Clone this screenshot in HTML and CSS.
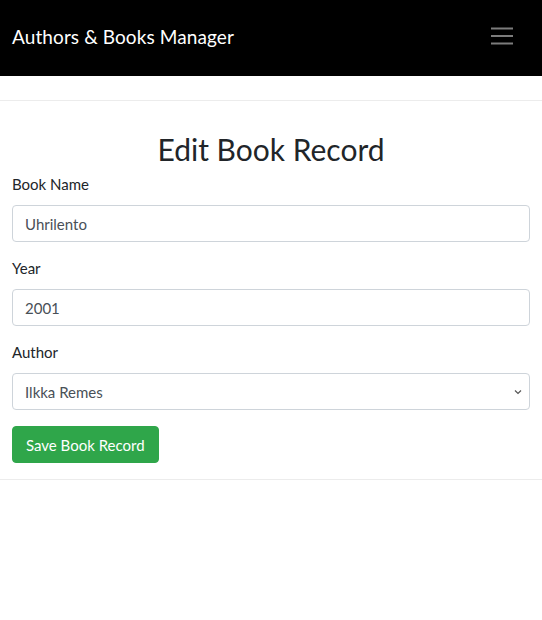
FILE: index.html
```html
<!DOCTYPE html>
<html lang="en">
<head>
<meta charset="utf-8">
<title>Edit Book Record</title>
<link rel="stylesheet" href="styles.css">
</head>
<body>
<nav class="navbar">
  <span class="brand">Authors &amp; Books Manager</span>
  <button class="toggler" type="button" aria-label="Toggle navigation">
    <svg width="30" height="30" viewBox="0 0 30 30"><path d="M4 7.5h22M4 15h22M4 22.5h22" stroke="#7c7c7c" stroke-width="2"/></svg>
  </button>
</nav>
<main class="container">
  <hr class="rule top">
  <h2 class="title">Edit Book Record</h2>
  <form class="form">
    <div class="group">
      <label class="label">Book Name</label>
      <input class="control" type="text" value="Uhrilento">
    </div>
    <div class="group">
      <label class="label">Year</label>
      <input class="control" type="text" value="2001">
    </div>
    <div class="group last">
      <label class="label">Author</label>
      <div class="select">
        <span>Ilkka Remes</span>
        <svg class="chev" width="8" height="6" viewBox="0 0 8 6"><path d="M1 1.5l3 3 3-3" fill="none" stroke="#555" stroke-width="1.2"/></svg>
      </div>
    </div>
    <button class="btn" type="button">Save Book Record</button>
  </form>
  <hr class="rule bottom">
</main>
</body>
</html>
```
FILE: styles.css
```css
* { box-sizing: border-box; }
body {
  margin: 0;
  font-family: Lato, "Noto Sans", sans-serif;
  color: #212529;
  background: #fff;
}
.navbar {
  height: 76px;
  background: #000;
  display: flex;
  align-items: center;
  justify-content: space-between;
  padding: 0 12px;
}
.brand {
  color: #fff;
  font-size: 19px;
  letter-spacing: 0.1px;
  margin-top: -4px;
}
.toggler {
  width: 56px;
  height: 40px;
  margin-top: -4px;
  background: #000;
  border: none;
  border-radius: 4px;
  display: flex;
  align-items: center;
  justify-content: center;
  padding: 0;
}
.container { padding: 0 12px; }
.rule {
  border: 0;
  border-top: 1px solid #ececec;
  margin: 0 -12px;
}
.rule.top { margin-top: 24px; }
.title {
  font-weight: 400;
  font-size: 30px;
  text-align: center;
  margin: 30px 0 0;
  line-height: 36px;
}
.form { margin-top: 7px; }
.group { margin-bottom: 16px; }
.label {
  display: block;
  font-size: 15px;
  line-height: 20px;
  margin-bottom: 11px;
}
.control, .select {
  display: flex;
  align-items: center;
  width: 100%;
  height: 37px;
  padding: 0 12px;
  border: 1px solid #ced4da;
  border-radius: 4px;
  font-family: inherit;
  font-size: 15px;
  color: #495057;
  background: #fff;
}
.select { justify-content: space-between; padding-right: 7px; }
.btn {
  height: 37px;
  padding: 0 13px;
  background: #2fa64a;
  color: #fff;
  border: 1px solid #2fa64a;
  border-radius: 4px;
  font-family: inherit;
  font-size: 15px;
}
.rule.bottom { margin-top: 16px; }
```
